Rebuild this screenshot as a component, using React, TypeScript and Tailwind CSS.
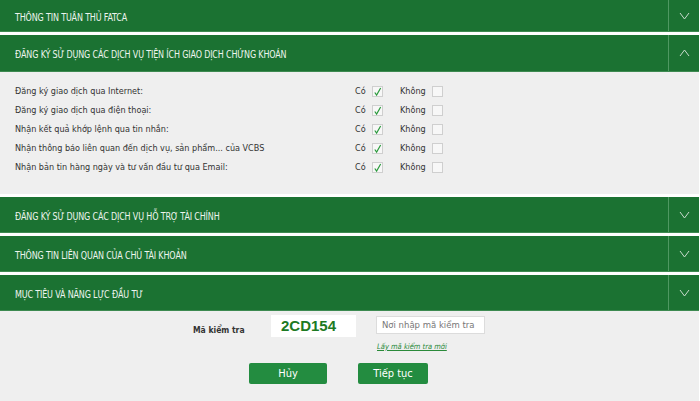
import React from "react";

const headFont = { fontFamily: '"DejaVu Sans Condensed", "DejaVu Sans", sans-serif' };
const condFont = { fontFamily: '"DejaVu Sans Condensed", "DejaVu Sans", sans-serif' };

function Chevron({ up }: { up?: boolean }) {
  return (
    <svg width="11" height="8" viewBox="0 0 11 8" className="block">
      <polyline
        points={up ? "1,7 5.5,1 10,7" : "1,1 5.5,7 10,1"}
        fill="none"
        stroke="#c9dccd"
        strokeWidth="1"
      />
    </svg>
  );
}

function Header({ title, up, h = "h-[36px]" }: { title: string; up?: boolean; h?: string }) {
  return (
    <div className={`flex ${h} bg-[#1b7232] border-b border-[#3d8a51]`}>
      <div className="flex-1 flex items-center pl-[15px] pt-[5px] overflow-hidden">
        <span
          className="inline-block whitespace-nowrap origin-left scale-x-[0.81] text-[11px] text-[#eef5ef] uppercase tracking-[-0.2px]"
          style={headFont}
        >
          {title}
        </span>
      </div>
      <div className="w-[31px] border-l border-[#4f9862] flex items-center justify-center">
        <Chevron up={up} />
      </div>
    </div>
  );
}

function Check({ checked }: { checked?: boolean }) {
  return (
    <div className="w-[11px] h-[11px] border border-[#cfcfcf] bg-[#f7f7f7] flex items-center justify-center">
      {checked && (
        <svg width="10" height="10" viewBox="0 0 10 10" className="block">
          <polyline points="2,5.5 4,8.5 8.5,0.5" fill="none" stroke="#2a9a3c" strokeWidth="1.3" />
        </svg>
      )}
    </div>
  );
}

const rows = [
  "Đăng ký giao dịch qua Internet:",
  "Đăng ký giao dịch qua điện thoại:",
  "Nhận kết quả khớp lệnh qua tin nhắn:",
  "Nhận thông báo liên quan đến dịch vụ, sản phẩm... của VCBS",
  "Nhận bản tin hàng ngày và tư vấn đầu tư qua Email:",
];

const bodyFont = { fontFamily: '"DejaVu Sans", Verdana, sans-serif' };

export default function App() {
  return (
    <div className="w-[700px] h-[401px] bg-white overflow-hidden">
      <div className="w-[699px]">
        <Header title="Thông tin tuân thủ FATCA" h="h-[32px]" />
        <div className="h-[3px]" />
        <Header title="Đăng ký sử dụng các dịch vụ tiện ích giao dịch chứng khoán" up h="h-[37px]" />
        <div className="bg-[#efefef] pt-[10px] pb-[17px] text-[9px] text-[#333]" style={condFont}>
          {rows.map((r) => (
            <div key={r} className="flex items-center h-[19px]">
              <div className="w-[355px] pl-[15px]">{r}</div>
              <div className="w-[17px]">Có</div>
              <Check checked />
              <div className="w-[17px]" />
              <div className="w-[32px]">Không</div>
              <Check />
            </div>
          ))}
        </div>
        <div className="h-[3px]" />
        <Header title="Đăng ký sử dụng các dịch vụ hỗ trợ tài chính" />
        <div className="h-[3px]" />
        <Header title="Thông tin liên quan của chủ tài khoản" />
        <div className="h-[3px]" />
        <Header title="Mục tiêu và năng lực đầu tư" />
        <div className="bg-[#efefef] h-[90px] pt-[4px]" style={bodyFont}>
          <div className="flex items-start pl-[193px]">
            <div className="w-[78px] pt-[9px] text-[8.5px] font-bold text-[#333]" style={condFont}>
              Mã kiểm tra
            </div>
            <div className="w-[85px] h-[22px] bg-white flex items-center pl-[10px]">
              <span
                className="text-[15px] font-bold text-[#1d7a23] tracking-[0px]"
                style={{ fontFamily: '"Liberation Sans", Arial, sans-serif' }}
              >
                2CD154
              </span>
            </div>
            <div className="ml-[20px] flex flex-col">
              <div className="mt-[1px] w-[109px] h-[18px] bg-white border border-[#dcdcdc] flex items-center pl-[5px] text-[8.5px] text-[#777]">
                Nơi nhập mã kiểm tra
              </div>
              <a className="mt-[7px] pl-[1px] text-[7.5px] italic underline text-[#2a8a3a]" style={condFont}>
                Lấy mã kiểm tra mới
              </a>
            </div>
          </div>
          <div className="flex pl-[249px] mt-[11px]">
            <div className="w-[78px] h-[21px] rounded-[2px] bg-[#238c40] text-white text-[11px] flex items-center justify-center" style={condFont}>
              Hủy
            </div>
            <div className="ml-[31px] w-[70px] h-[21px] rounded-[2px] bg-[#238c40] text-white text-[11px] flex items-center justify-center" style={condFont}>
              Tiếp tục
            </div>
          </div>
        </div>
      </div>
    </div>
  );
}
